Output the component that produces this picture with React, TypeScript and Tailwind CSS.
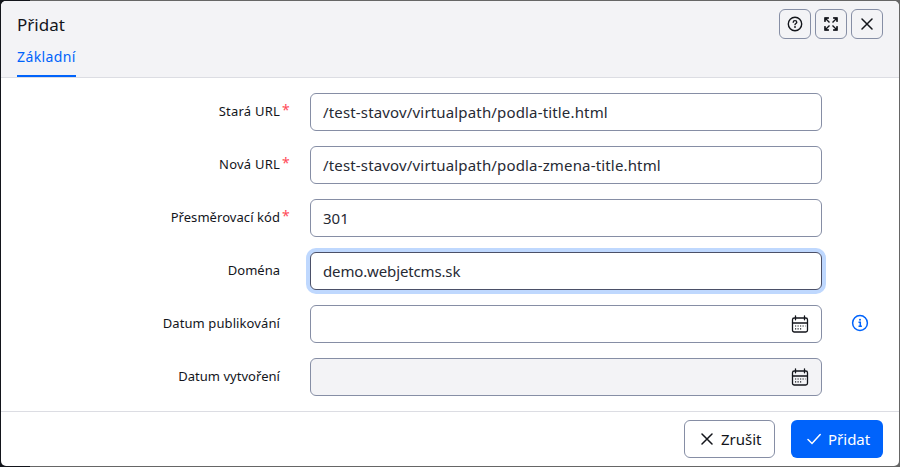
import React from 'react';

function HelpIcon() {
  return (
    <svg width="16" height="16" viewBox="0 0 16 16" fill="none" stroke="#13151b" strokeWidth="1.4" strokeLinecap="round">
      <circle cx="8" cy="8" r="6.700" />
      <path d="M6.200 6.300C6.200 5.200 7 4.700 8 4.700s1.800.6 1.800 1.500c0 1.200-1.800 1.300-1.800 2.500" strokeWidth="1.300" />
      <circle cx="8" cy="11" r=".9" fill="#13151b" stroke="none" />
    </svg>
  );
}

function ExpandIcon() {
  return (
    <svg width="16" height="16" viewBox="0 0 16 16" fill="none" stroke="#13151b" strokeWidth="1.400">
      <path d="M2 6V2h4M10 2h4v4M14 10v4h-4M6 14H2v-4M2 2l4.500 4.500M14 2L9.500 6.500M14 14L9.500 9.500M2 14l4.500-4.500" />
      <path d="M1.500 1.500h4l-4 4zM14.500 1.500h-4l4 4zM14.500 14.500h-4l4-4zM1.500 14.500h4l-4-4z" fill="#13151b" stroke="none" />
    </svg>
  );
}

function CrossIcon({ size }: { size: number }) {
  return (
    <svg width={size} height={size} viewBox="0 0 12 12" fill="none" stroke="#13151b" strokeWidth="1.500" strokeLinecap="round">
      <path d="M1 1l10 10M11 1L1 11" />
    </svg>
  );
}

function CalendarIcon() {
  return (
    <svg width="18" height="18" viewBox="0 0 18 18" fill="none" stroke="#13151b" strokeWidth="1.300" strokeLinecap="round">
      <rect x="1.500" y="3" width="15" height="14" rx="1.800" />
      <path d="M1.500 8h15M4.500 .8v4M13.500 .8v4" />
      <path d="M4 11h10.500M4 13.800h7.500" strokeWidth="1.200" strokeDasharray="1.200 1.300" strokeLinecap="butt" />
    </svg>
  );
}

function InfoIcon() {
  return (
    <svg width="18" height="18" viewBox="0 0 18 18" fill="none" stroke="#0063fb" strokeWidth="1.500">
      <circle cx="9" cy="9" r="7.400" />
      <path d="M7.500 8.200h1.800v4M7.500 12.200h3.400" />
      <circle cx="9" cy="5.700" r="1" fill="#0063fb" stroke="none" />
    </svg>
  );
}

type Row = { label: string; labelClass: string; value?: string; valueClass?: string; required?: boolean; focused?: boolean; date?: boolean; disabled?: boolean; info?: boolean };

const rows: Row[] = [
  { label: 'Stará URL', labelClass: 'tracking-[0.22px]', value: '/test-stavov/virtualpath/podla-title.html', valueClass: 'tracking-[0.16px]', required: true },
  { label: 'Nová URL', labelClass: 'tracking-[0.22px]', value: '/test-stavov/virtualpath/podla-zmena-title.html', valueClass: 'tracking-[0.16px]', required: true },
  { label: 'Přesměrovací kód', labelClass: 'tracking-[0.06px]', value: '301', valueClass: 'tracking-[0px]', required: true },
  { label: 'Doména', labelClass: 'tracking-[0px]', value: 'demo.webjetcms.sk', valueClass: 'tracking-[-0.14px]', focused: true },
  { label: 'Datum publikování', labelClass: 'tracking-[0.1px]', date: true, info: true },
  { label: 'Datum vytvoření', labelClass: 'tracking-[0.04px]', date: true, disabled: true },
];

function FormRow({ row }: { row: Row }) {
  return (
    <div className="flex h-[38px] items-center">
      <div className="flex h-full w-[279px] shrink-0 justify-end pt-[8px] text-[13px] leading-5 whitespace-nowrap text-[#13151b]">
        <span className={row.labelClass}>{row.label}</span>
      </div>
      <div className="h-full w-[30px] shrink-0 pt-[7px] pl-[2px] text-[14px] leading-5 text-[#ff4b58]">{row.required ? '*' : ''}</div>
      <div
        className={
          'flex h-full w-[512px] shrink-0 items-center justify-between rounded-[6px] border pr-3 pl-3 text-[15px] text-[#272a34] ' +
          (row.focused ? 'border-[#4b5068] ring-4 ring-[#bfd8fe] ' : 'border-[#868ea5] ') +
          (row.disabled ? 'bg-[#f3f3f6]' : 'bg-white')
        }
      >
        <span className={row.valueClass}>{row.value}</span>
        {row.date && <span className="ml-auto"><CalendarIcon /></span>}
      </div>
      {row.info && (
        <div className="ml-[29px] pb-[2px]">
          <InfoIcon />
        </div>
      )}
    </div>
  );
}

export default function App() {
  return (
    <div className="h-[467px] w-[900px] overflow-hidden bg-[linear-gradient(to_right,#13151b_30px,#666666_30px)] p-px font-['Noto_Sans',sans-serif]">
      <div className="flex h-[465px] w-[898px] flex-col overflow-hidden rounded-[5px] bg-white">
        <header className="flex h-[77px] shrink-0 justify-between border-b border-[#dcdde3] bg-[#f3f3f6] pr-4 pl-4">
          <div className="flex flex-col items-start">
            <h1 className="mt-3 h-6 text-[17px] leading-6 text-[#13151b]">Přidat</h1>
            <div className="mt-[7px] h-[33px] w-[59px] border-b-2 border-[#0063fb] pt-[3px] text-[14px] leading-5 tracking-[0.4px] whitespace-nowrap text-[#0063fb]">
              <span>Základní</span>
            </div>
          </div>
          <div className="mt-2 flex h-[30px] gap-1">
            <button className="flex w-8 items-center justify-center rounded-[6px] border border-[#868ea5]"><HelpIcon /></button>
            <button className="flex w-8 items-center justify-center rounded-[6px] border border-[#868ea5]"><ExpandIcon /></button>
            <button className="flex w-8 items-center justify-center rounded-[6px] border border-[#868ea5]"><CrossIcon size={12} /></button>
          </div>
        </header>
        <main className="flex h-[333px] shrink-0 flex-col gap-[15px] pt-[15px]">
          {rows.map((row) => (
            <FormRow key={row.label} row={row} />
          ))}
        </main>
        <footer className="flex flex-1 justify-end gap-4 border-t border-[#dcdde3] pt-2 pr-4">
          <button className="flex h-[38px] w-[91px] items-center rounded-[6px] border border-[#868ea5] pl-4 text-[15px] text-[#13151b]">
            <CrossIcon size={12} />
            <span className="ml-2">Zrušit</span>
          </button>
          <button className="flex h-[38px] w-[92px] items-center rounded-[6px] bg-[#0063fb] pl-4 text-[15px] text-white">
            <svg width="14" height="12" viewBox="0 0 14 12" fill="none" stroke="white" strokeWidth="1.500" strokeLinecap="round">
              <path d="M1 6.500l4 4L13.200 1.500" />
            </svg>
            <span className="ml-[7px]">Přidat</span>
          </button>
        </footer>
      </div>
    </div>
  );
}
